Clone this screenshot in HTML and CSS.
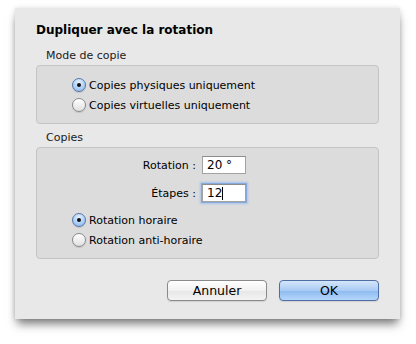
FILE: index.html
```html
<!DOCTYPE html>
<html lang="fr">
<head>
    <meta charset="UTF-8">
    <title>Dupliquer avec la rotation</title>
    <link rel="stylesheet" href="styles.css">
</head>
<body>
    <div class="sheet">
        <h1 class="title">Dupliquer avec la rotation</h1>

        <div class="group-label">Mode de copie</div>
        <div class="group-box mode-box">
            <div class="radio-row"><span class="radio on"></span>Copies physiques uniquement</div>
            <div class="radio-row"><span class="radio"></span>Copies virtuelles uniquement</div>
        </div>

        <div class="group-label">Copies</div>
        <div class="group-box copies-box">
            <div class="field-row">
                <label class="field-label">Rotation :</label>
                <div class="text-field">20 °</div>
            </div>
            <div class="field-row">
                <label class="field-label">Étapes :</label>
                <div class="text-field focused">12<span class="caret"></span></div>
            </div>
            <div class="radio-row"><span class="radio on"></span>Rotation horaire</div>
            <div class="radio-row"><span class="radio"></span>Rotation anti-horaire</div>
        </div>

        <div class="buttons">
            <button class="btn">Annuler</button>
            <button class="btn default">OK</button>
        </div>
    </div>
</body>
</html>
```

FILE: styles.css
```css
* {
    margin: 0;
    padding: 0;
    box-sizing: border-box;
}

html, body {
    min-height: 100%;
}

body {
    background: #ffffff;
    padding: 8px 0 25px 15px;
    font-family: "DejaVu Sans", "Liberation Sans", sans-serif;
    font-size: 11px;
    color: #000;
}

.sheet {
    width: 385px;
    height: 311px;
    padding: 14px 21px 0 21px;
    background: #e8e8e8;
    box-shadow: 0 7px 9px -2px rgba(0, 0, 0, 0.5), 0 0 5px rgba(0, 0, 0, 0.12);
}

.title {
    font-size: 12px;
    font-weight: bold;
    line-height: 16px;
    color: #000;
    margin-bottom: 10px;
}

.group-label {
    padding-left: 10px;
    line-height: 16px;
    color: #1a1a1a;
    margin-bottom: 1px;
}

.group-box {
    background: #dcdcdc;
    border: 1px solid #c4c4c4;
    border-radius: 4px;
}

.mode-box {
    padding: 9px 0 8px 35px;
    margin-bottom: 6px;
}

.copies-box {
    padding: 8px 0 8px 35px;
}

.radio-row {
    display: flex;
    align-items: center;
    height: 20px;
}

.radio {
    width: 14px;
    height: 14px;
    margin-right: 3px;
    border-radius: 50%;
    border: 1px solid #8a8a8a;
    background: linear-gradient(#ffffff, #e0e0e0);
    box-shadow: 0 1px 1px rgba(0, 0, 0, 0.12);
    display: flex;
    align-items: center;
    justify-content: center;
}

.radio.on {
    border-color: #5a76a8;
    background: radial-gradient(circle at 50% 30%, #e6f1ff, #a9cdf5 60%, #7fb0ec);
}

.radio.on::after {
    content: "";
    width: 4px;
    height: 4px;
    border-radius: 50%;
    background: #111;
}

.field-row {
    display: flex;
    align-items: center;
    margin-left: -35px;
    margin-bottom: 10px;
}

.field-row + .field-row {
    margin-bottom: 8px;
}

.field-label {
    width: 159px;
    text-align: right;
    margin-right: 6px;
}

.text-field {
    width: 44px;
    height: 18px;
    padding: 0 4px;
    font-size: 12px;
    background: #fff;
    border: 1px solid #a3a3a3;
    border-top-color: #8c8c8c;
    display: flex;
    align-items: center;
}

.text-field.focused {
    box-shadow: 0 0 0 1px #86a8dc, 0 0 2px 2px #a7c3ec;
}

.caret {
    width: 1px;
    height: 13px;
    background: #000;
}

.buttons {
    display: flex;
    justify-content: flex-end;
    gap: 12px;
    margin-top: 21px;
}

.btn {
    width: 100px;
    height: 21px;
    font-family: inherit;
    font-size: 12.5px;
    color: #000;
    border: 1px solid #8a8a8a;
    border-radius: 4px;
    background: linear-gradient(#ffffff, #f1f1f1 50%, #e6e6e6 51%, #f4f4f4);
    box-shadow: 0 1px 1px rgba(0, 0, 0, 0.1);
}

.btn.default {
    border-color: #4f6ea5;
    background: linear-gradient(#d4e6fb, #a9cbf4 50%, #8dbaf0 51%, #b5d6fb);
}
```
